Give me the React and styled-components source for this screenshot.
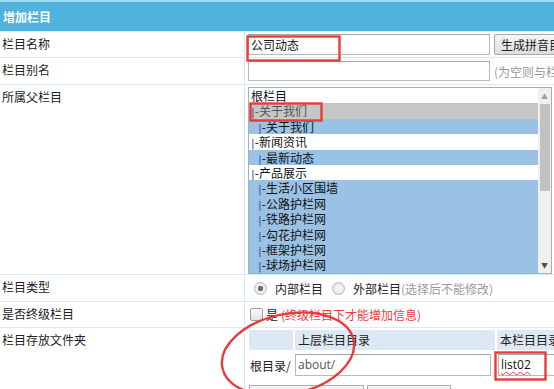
import styled, { createGlobalStyle } from "styled-components";

const Global = createGlobalStyle`
  html, body {
    margin: 0;
    padding: 0;
    background: #fff;
    overflow: hidden;
  }
  body {
    font-family: "Noto Sans CJK SC", "Microsoft YaHei", sans-serif;
    font-size: 12px;
    color: #222;
  }
`;

const Page = styled.div`
  position: relative;
  width: 554px;
  height: 389px;
  overflow: hidden;
`;

const Header = styled.div`
  height: 29px;
  border-top: 2px solid #a6daf3;
  border-bottom: 1px solid #d4edfa;
  background: #4fb3de;
  color: #fff;
  font-weight: bold;
  display: flex;
  align-items: center;
  padding-left: 3px;
`;

const Row = styled.div`
  display: grid;
  grid-template-columns: 245px 1fr;
  height: ${(props) => props.h}px;
  border-bottom: 1px solid #d4ecf9;
`;

const Label = styled.div`
  border-right: 1px solid #d4ecf9;
  padding: 3px 0 0 2px;
  line-height: 18px;
  white-space: nowrap;
`;

const Cell = styled.div`
  display: flex;
  align-items: ${(props) => props.align || "center"};
  padding-left: ${(props) => (props.pl === undefined ? 3 : props.pl)}px;
  white-space: nowrap;
  overflow: hidden;
`;

const Input = styled.div`
  box-sizing: border-box;
  width: ${(props) => props.w}px;
  height: ${(props) => props.h}px;
  border: 1px solid #b9b9b9;
  border-top-color: #a5a5a5;
  background: #fff;
  padding-left: 2px;
  line-height: ${(props) => props.h - 2}px;
  flex-shrink: 0;
  font-family: ${(props) =>
    props.latin ? '"Open Sans", "Liberation Sans", sans-serif' : "inherit"};
  color: ${(props) => (props.dim ? "#555" : "#111")};
`;

const Button = styled.div`
  box-sizing: border-box;
  height: 21px;
  margin-left: 4px;
  padding: 0 6px;
  border: 1px solid #a9a9a9;
  border-radius: 2px;
  background: linear-gradient(#f6f6f6, #dedede);
  line-height: 19px;
  flex-shrink: 0;
`;

const Hint = styled.span`
  color: ${(props) => props.c || "#9a9a9a"};
  margin-left: ${(props) => props.ml || 0}px;
`;

const ListBox = styled.div`
  box-sizing: border-box;
  width: 304px;
  height: 187px;
  margin-top: 2px;
  border: 1px solid #adadad;
  display: flex;
  flex-shrink: 0;
  overflow: hidden;
`;

const Options = styled.div`
  flex: 1;
`;

const Option = styled.div`
  height: 15.4px;
  line-height: 15px;
  padding-left: ${(props) => (props.sub ? 9 : 2)}px;
  background: ${(props) =>
    props.state === "gray" ? "#c6c6c6" : props.state === "blue" ? "#99c2e4" : "#fff"};
  color: ${(props) => (props.state === "gray" ? "#555" : "#111")};
  overflow: hidden;
  white-space: nowrap;
`;

const Bar = styled.span`
  color: #3e4fa0;
  font-family: "DejaVu Sans", sans-serif;
  font-size: 11px;
`;

const Scroll = styled.div`
  width: 13px;
  background: #f0f0f0;
  display: flex;
  flex-direction: column;
  align-items: center;
`;

const Arrow = styled.div`
  height: 16px;
  font-size: 7px;
  line-height: 16px;
  color: ${(props) => props.c || "#a0a0a0"};
`;

const Thumb = styled.div`
  width: 10px;
  height: 87px;
  background: #c1c1c1;
`;

const Spacer = styled.div`
  flex: 1;
`;

const Radio = styled.span`
  box-sizing: border-box;
  width: 13px;
  height: 13px;
  border-radius: 50%;
  border: 1px solid #b8b8b8;
  background: radial-gradient(circle, ${(props) => (props.on ? "#6d6d6d 0 2.5px," : "")} #f2f2f2 3px, #e2e2e2 6px);
  margin: 0 ${(props) => props.mr || 6}px 0 ${(props) => props.ml || 0}px;
  flex-shrink: 0;
`;

const Check = styled.span`
  box-sizing: border-box;
  width: 13px;
  height: 13px;
  border: 1px solid #9e9e9e;
  border-radius: 2px;
  background: linear-gradient(#fafafa, #e2e2e2);
  margin: 0 3px 0 2px;
  flex-shrink: 0;
`;

const DirTable = styled.div`
  display: grid;
  grid-template-columns: 44px 200px 1fr;
  grid-template-rows: 20px 26px 10px;
  column-gap: 2px;
  row-gap: 2px;
  padding: 2px 0 0 2px;
  width: 100%;
`;

const HeadCell = styled.div`
  background: #dce9f5;
  padding-left: 3px;
  line-height: 20px;
  white-space: nowrap;
  overflow: hidden;
`;

const BodyCell = styled.div`
  display: flex;
  align-items: center;
  padding-left: ${(props) => props.pl || 0}px;
  white-space: nowrap;
`;

const Stub = styled.div`
  box-sizing: border-box;
  border: 1px solid #b0b0b0;
  border-bottom: none;
  background: #f2f2f2;
  margin-top: 5px;
  margin-left: ${(props) => props.ml || 0}px;
  width: ${(props) => props.w}px;
  height: 8px;
`;

const Squiggle = styled.span`
  text-decoration: underline wavy #e04040;
  text-decoration-thickness: 1px;
  text-underline-offset: 2px;
`;

const Marks = styled.svg`
  position: absolute;
  left: 0;
  top: 0;
  pointer-events: none;
`;

const items = [
  { t: "根栏目", state: "white" },
  { t: "-关于我们", state: "gray", bar: true },
  { t: "-关于我们", state: "blue", bar: true, sub: true },
  { t: "-新闻资讯", state: "white", bar: true },
  { t: "-最新动态", state: "blue", bar: true, sub: true },
  { t: "-产品展示", state: "white", bar: true },
  { t: "-生活小区围墙", state: "blue", bar: true, sub: true },
  { t: "-公路护栏网", state: "blue", bar: true, sub: true },
  { t: "-铁路护栏网", state: "blue", bar: true, sub: true },
  { t: "-勾花护栏网", state: "blue", bar: true, sub: true },
  { t: "-框架护栏网", state: "blue", bar: true, sub: true },
  { t: "-球场护栏网", state: "blue", bar: true, sub: true },
];

export default function App() {
  return (
    <Page>
      <Global />
      <Header>增加栏目</Header>

      <Row h={25}>
        <Label>栏目名称</Label>
        <Cell>
          <Input w={242} h={21}>公司动态</Input>
          <Button>生成拼音目录</Button>
        </Cell>
      </Row>

      <Row h={26}>
        <Label>栏目别名</Label>
        <Cell>
          <Input w={242} h={20} />
          <Hint ml={4}>(为空则与栏目名称相同)</Hint>
        </Cell>
      </Row>

      <Row h={189}>
        <Label>所属父栏目</Label>
        <Cell align="flex-start">
          <ListBox>
            <Options>
              {items.map((it, i) => (
                <Option key={i} state={it.state} sub={it.sub}>
                  {it.bar && <Bar>|</Bar>}
                  {it.t}
                </Option>
              ))}
            </Options>
            <Scroll>
              <Arrow>▲</Arrow>
              <Thumb />
              <Spacer />
              <Arrow c="#505050">▼</Arrow>
            </Scroll>
          </ListBox>
        </Cell>
      </Row>

      <Row h={26}>
        <Label>栏目类型</Label>
        <Cell>
          <Radio on ml={6} mr={8} />
          内部栏目
          <Radio ml={9} mr={8} />
          外部栏目<Hint>(选择后不能修改)</Hint>
        </Cell>
      </Row>

      <Row h={25}>
        <Label>是否终级栏目</Label>
        <Cell>
          <Check />是<Hint c="#f23a3a" ml={3}>(终级栏目下才能增加信息)</Hint>
        </Cell>
      </Row>

      <Row h={70}>
        <Label>栏目存放文件夹</Label>
        <Cell align="flex-start" pl={2}>
          <DirTable>
            <HeadCell />
            <HeadCell>上层栏目目录</HeadCell>
            <HeadCell>本栏目目录</HeadCell>
            <BodyCell pl={1}>根目录/</BodyCell>
            <BodyCell>
              <Input w={196} h={22} latin dim>about/</Input>
            </BodyCell>
            <BodyCell pl={1}>
              <Input w={70} h={22} latin>
                <Squiggle>list02</Squiggle>
              </Input>
            </BodyCell>
            <Stub w={115} />
            <Stub w={84} ml={72} />
            <div />
          </DirTable>
        </Cell>
      </Row>

      <Marks width="554" height="389" viewBox="0 0 554 389">
        <g fill="none" stroke="#ea3b3b" strokeWidth="2.4">
          <rect x="247.5" y="36.5" width="92" height="24" />
          <rect x="250.5" y="103.5" width="71" height="17" />
          <rect x="495.5" y="352.5" width="50" height="27" />
          <ellipse cx="288" cy="354" rx="67" ry="40" transform="rotate(-12 288 354)" />
        </g>
      </Marks>
    </Page>
  );
}
